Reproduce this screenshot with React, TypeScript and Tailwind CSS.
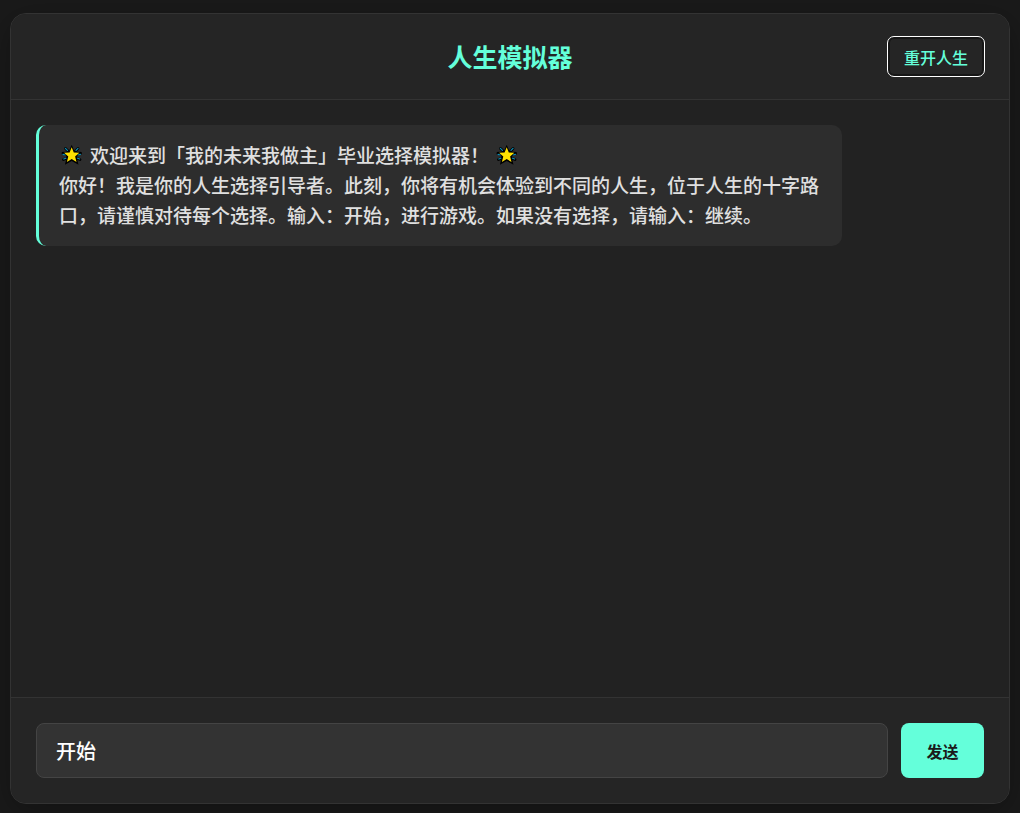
import { FormEvent, useState } from "react";

const WELCOME = "你好！我是你的人生选择引导者。此刻，你将有机会体验到不同的人生，位于人生的十字路口，请谨慎对待每个选择。输入：开始，进行游戏。如果没有选择，请输入：继续。";

function GlowingStar() {
  return (
    <svg viewBox="0 0 26 26" className="inline-block size-[26px] align-middle" role="img" aria-label="星星">
      <path
        d="M6.5 6.5l2.5 2.5M19 6.5L16.5 9M4 11.5l3 1M21.5 11.5l-3 1M4.5 17.5l3-1M21 17.5l-3-1"
        fill="none"
        stroke="#000"
        strokeWidth="2.8"
        strokeLinecap="round"
      />
      <path
        d="M12.7 2.8l2.9 6.7 7.3.6-5.3 5 1.9 7.6-6.8-3.8-6.8 3.8 1.9-7.6-5.3-5 7.3-.6z"
        fill="#000"
      />
      <path
        d="M6.4 6.4l2 2M19 6.4l-2 2M4 12.4l2.2.6M21.4 12.4l-2.2.6M4.8 17l2-.8M20.6 17l-2-.8"
        fill="none"
        stroke="#0b8fb8"
        strokeWidth="1.2"
        strokeLinecap="round"
      />
      <path
        d="M12.7 5.2l2.1 5.2 5.5.4-4.2 3.7 1.4 5.5-4.8-2.9-4.8 2.9 1.4-5.5-4.2-3.7 5.5-.4z"
        fill="#ffe100"
      />
    </svg>
  );
}

export default function App() {
  const [text, setText] = useState("开始");

  const handleSubmit = (e: FormEvent) => {
    e.preventDefault();
    setText("");
  };

  return (
    <div className="flex min-h-screen flex-col bg-[#1a1a1a] px-2.5 pt-[13px] pb-[9px] font-['Noto_Sans_CJK_SC',sans-serif] font-medium">
      <main className="flex flex-1 flex-col overflow-hidden rounded-2xl border border-[#333] bg-[#222] shadow-[0_8px_32px_rgba(0,0,0,0.3)]">
        <header className="grid h-[86px] grid-cols-[1fr_auto_1fr] items-center border-b border-[#333] bg-[#252525] px-6">
          <h1 className="col-start-2 text-[25px] font-bold text-[#64ffda]">人生模拟器</h1>
          <button
            type="button"
            onClick={() => setText("")}
            className="h-[41px] w-[98px] justify-self-end rounded-[7px] border border-white text-base text-[#64ffda] shadow-[inset_0_0_0_2px_#161616]"
          >
            重开人生
          </button>
        </header>

        <section className="flex-1 p-[25px]">
          <div className="w-[85%] rounded-[10px] border-l-3 border-[#64ffda] bg-[#2d2d2d] px-5 pt-[15px] pb-4 text-[19px] leading-[30px] text-[#e0e0e0]">
            <p className="flex h-[30px] items-center gap-[5px]">
              <GlowingStar />
              <span>欢迎来到「我的未来我做主」毕业选择模拟器！</span>
              <GlowingStar />
            </p>
            <p>{WELCOME}</p>
          </div>
        </section>

        <form
          onSubmit={handleSubmit}
          className="flex gap-[13px] border-t border-[#333] bg-[#252525] p-[25px]"
        >
          <input
            type="text"
            aria-label="输入你的选择"
            value={text}
            onChange={(e) => setText(e.target.value)}
            className="h-[55px] min-w-0 flex-1 rounded-lg border border-[#444] bg-[#333] px-[19px] text-xl text-white outline-none"
          />
          <button
            type="submit"
            className="h-[55px] w-[83px] rounded-lg bg-[#64ffda] text-base font-bold text-[#1a1a1a]"
          >
            发送
          </button>
        </form>
      </main>
    </div>
  );
}
